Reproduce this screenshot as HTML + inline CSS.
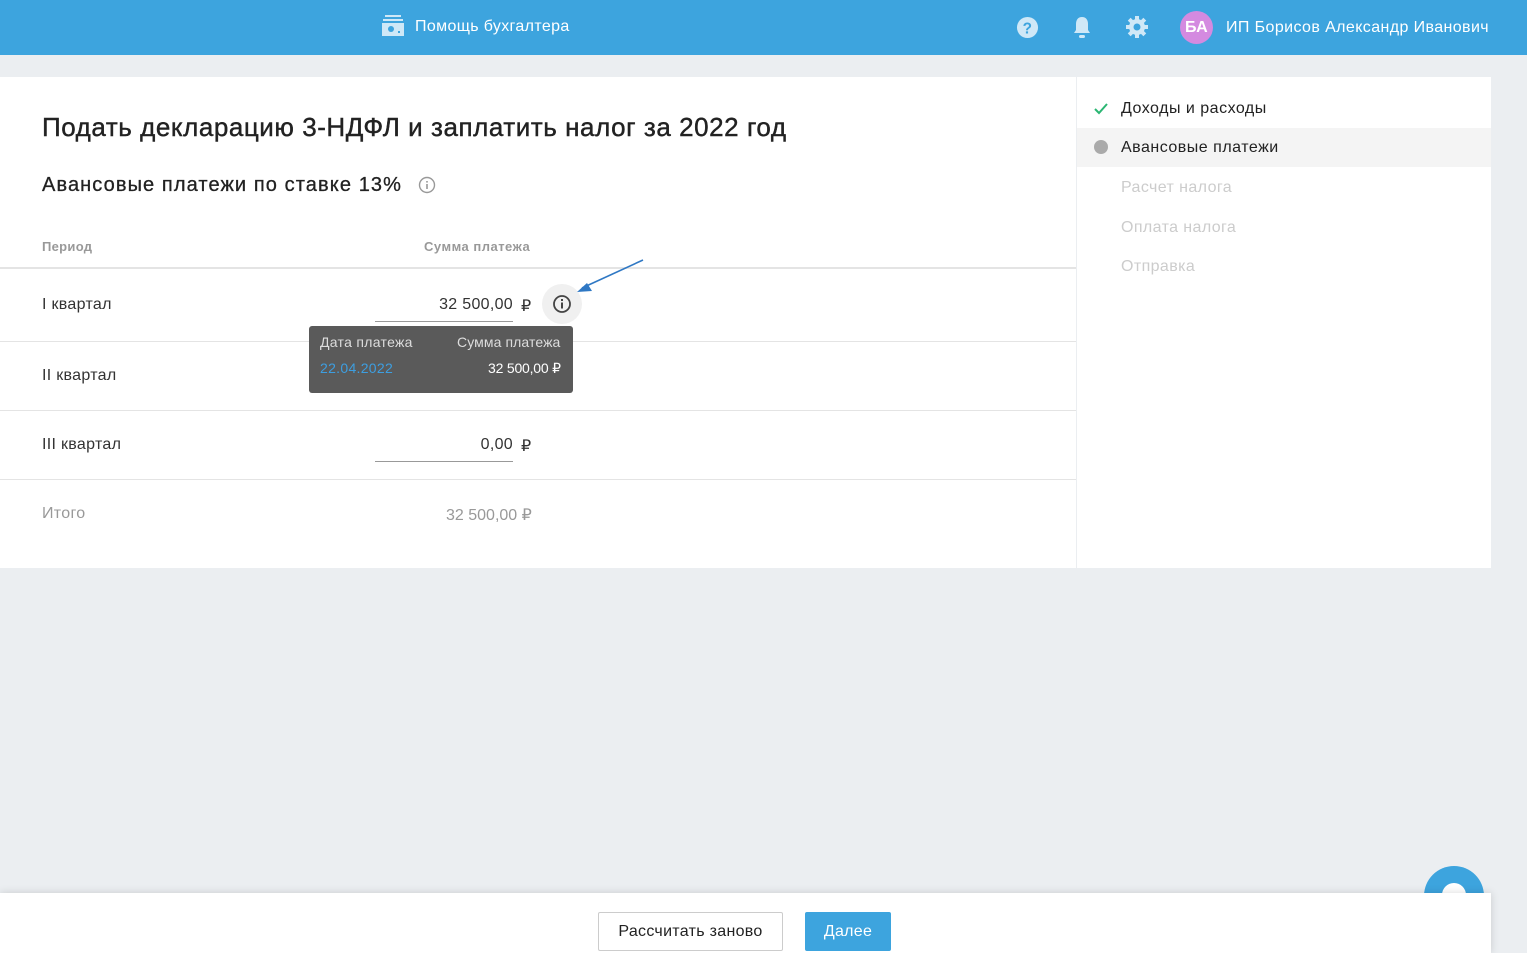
<!DOCTYPE html>
<html><head><meta charset="utf-8"><style>
*{box-sizing:border-box;margin:0;padding:0}
body{width:1527px;height:953px;overflow:hidden;background:#ebeef1;font-family:"Liberation Sans",sans-serif;color:#333;position:relative;letter-spacing:0.3px}
.hdr{position:absolute;left:0;top:0;width:1527px;height:55px;background:#3da4de;color:#fff}
.abs{position:absolute}
.card{position:absolute;left:0;top:77px;width:1076px;height:491px;background:#fff}
.side{position:absolute;left:1077px;top:77px;width:414px;height:491px;background:#fff}
.line{position:absolute;left:0;width:1076px;height:1px;background:#e4e4e4}
.t{position:absolute;white-space:nowrap}
.foot{position:absolute;left:0;top:893px;width:1491px;height:60px;background:#fff;box-shadow:0 0 8px rgba(0,0,0,.15)}
</style></head><body>
<div class="hdr">
 <svg class="abs" style="left:382px;top:14px" width="22" height="22" viewBox="0 0 22 22"><rect x="3" y="1" width="16" height="2" fill="#cfe8f7"/><rect x="1" y="5" width="20" height="2" fill="#cfe8f7"/><rect x="0" y="9" width="22" height="13" fill="#cfe8f7"/><circle cx="9" cy="15" r="3" fill="#3da4de"/><rect x="16" y="17" width="2" height="2" fill="#3da4de"/></svg>
 <div class="t" style="left:415px;top:18px;font-size:16px;letter-spacing:0.35px">Помощь бухгалтера</div>
 <svg class="abs" style="left:1016px;top:16px" width="23" height="23" viewBox="0 0 24 24"><circle cx="12" cy="12" r="11" fill="#cfe8f7"/><text x="12" y="18" font-size="16" font-weight="bold" text-anchor="middle" fill="#3da4de" font-family="Liberation Sans">?</text></svg>
 <svg class="abs" style="left:1072px;top:16px" width="20" height="23" viewBox="0 0 20 23"><path d="M10 1c-4 0-6 3-6 7v6l-2 3h16l-2-3V8c0-4-2-7-6-7z" fill="#cfe8f7"/><rect x="7" y="19" width="6" height="3" rx="1.5" fill="#cfe8f7"/></svg>
 <svg class="abs" style="left:1125px;top:15px" width="24" height="24" viewBox="0 0 24 24"><g fill="#cfe8f7"><circle cx="12" cy="12" r="8"/><g stroke="#cfe8f7" stroke-width="4"><path d="M12 1v22M1 12h22M4.2 4.2l15.6 15.6M19.8 4.2L4.2 19.8"/></g></g><circle cx="12" cy="12" r="3.5" fill="#3da4de"/></svg>
 <div class="abs" style="left:1180px;top:11px;width:33px;height:33px;border-radius:50%;background:#d48ae0;color:#fff;font-weight:bold;font-size:16px;text-align:center;line-height:33px">БА</div>
 <div class="t" style="left:1226px;top:19px;font-size:16px;letter-spacing:0.4px">ИП Борисов Александр Иванович</div>
</div>
<div class="card">
 <div class="t" style="left:42px;top:35px;font-size:26px;letter-spacing:0.55px;color:#222;-webkit-text-stroke:0.4px #222">Подать декларацию 3-НДФЛ и заплатить налог за 2022 год</div>
 <div class="t" style="left:42px;top:97px;font-size:20px;letter-spacing:1.1px;color:#222;-webkit-text-stroke:0.3px #222">Авансовые платежи по ставке 13%</div>
 <svg class="abs" style="left:418px;top:99px" width="18" height="18" viewBox="0 0 18 18"><circle cx="9" cy="9" r="7.5" fill="none" stroke="#999" stroke-width="1.4"/><rect x="8.2" y="8" width="1.6" height="5" fill="#999"/><rect x="8.2" y="5" width="1.6" height="1.6" fill="#999"/></svg>
 <div class="t" style="left:42px;top:162px;font-size:13px;font-weight:bold;color:#999">Период</div>
 <div class="t" style="left:424px;top:162px;font-size:13px;font-weight:bold;color:#999;letter-spacing:0.5px">Сумма платежа</div>
 <div class="line" style="top:190px;height:2px"></div>
 <div class="t" style="left:42px;top:219px;font-size:16px">I квартал</div>
 <div class="t" style="left:375px;width:138px;text-align:right;top:219px;font-size:16px">32 500,00</div>
 <div class="t" style="left:521px;top:219px;font-size:16px">₽</div>
 <div class="abs" style="left:375px;top:244px;width:138px;height:1px;background:#999"></div>
 <div class="abs" style="left:542px;top:207px;width:40px;height:40px;border-radius:50%;background:#f0f0f0"></div>
 <svg class="abs" style="left:552px;top:217px" width="20" height="20" viewBox="0 0 20 20"><circle cx="10" cy="10" r="8" fill="none" stroke="#444" stroke-width="1.8"/><rect x="9" y="8.5" width="2" height="6" fill="#444"/><rect x="9" y="5" width="2" height="2" fill="#444"/></svg>
 <div class="line" style="top:264px"></div>
 <div class="t" style="left:42px;top:290px;font-size:16px">II квартал</div>
 <div class="line" style="top:333px"></div>
 <div class="t" style="left:42px;top:359px;font-size:16px">III квартал</div>
 <div class="t" style="left:375px;width:138px;text-align:right;top:359px;font-size:16px">0,00</div>
 <div class="t" style="left:521px;top:359px;font-size:16px">₽</div>
 <div class="abs" style="left:375px;top:384px;width:138px;height:1px;background:#999"></div>
 <div class="line" style="top:402px"></div>
 <div class="t" style="left:42px;top:428px;font-size:16px;color:#999">Итого</div>
 <div class="t" style="left:446px;top:428px;font-size:16px;color:#999;letter-spacing:0">32 500,00 ₽</div>
 <div class="abs" style="left:309px;top:249px;width:264px;height:67px;background:#5a5a5a;border-radius:3px"></div>
 <div class="t" style="left:320px;top:257px;font-size:14px;color:#ddd">Дата платежа</div>
 <div class="t" style="left:457px;top:257px;font-size:14px;color:#ddd;letter-spacing:0.1px">Сумма платежа</div>
 <div class="t" style="left:488px;top:283px;font-size:14px;color:#fff;letter-spacing:-0.2px">32 500,00 ₽</div>
 <div class="t" style="left:320px;top:283px;font-size:14px;color:#3d9ee0">22.04.2022</div>
 <svg class="abs" style="left:570px;top:180px" width="80" height="40" viewBox="0 0 80 40"><path d="M73 3L12 31" stroke="#2f78c4" stroke-width="1.6" fill="none"/><path d="M7 35l15-1-5-8z" fill="#2f78c4"/></svg>
</div>
<div class="side">
 <svg class="abs" style="left:17px;top:26px" width="14" height="12" viewBox="0 0 14 12"><path d="M1 6l4 4 8-9" stroke="#2bb673" stroke-width="2" fill="none"/></svg>
 <div class="t" style="left:44px;top:23px;font-size:16px;color:#222;letter-spacing:0.5px">Доходы и расходы</div>
 <div class="abs" style="left:0;top:51px;width:414px;height:39px;background:#f4f4f4"></div>
 <div class="abs" style="left:17px;top:63px;width:14px;height:14px;border-radius:50%;background:#aaa"></div>
 <div class="t" style="left:44px;top:62px;font-size:16px;color:#222;letter-spacing:0.5px">Авансовые платежи</div>
 <div class="t" style="left:44px;top:102px;font-size:16px;color:#ccc;letter-spacing:0.4px">Расчет налога</div>
 <div class="t" style="left:44px;top:142px;font-size:16px;color:#ccc;letter-spacing:0.4px">Оплата налога</div>
 <div class="t" style="left:44px;top:181px;font-size:16px;color:#ccc;letter-spacing:0.4px">Отправка</div>
</div>
<div class="abs" style="left:1424px;top:866px;width:60px;height:60px;border-radius:50%;background:#3da4de"></div>
<div class="abs" style="left:1442px;top:883px;width:24px;height:24px;border-radius:50%;background:#fff"></div>
<div class="foot">
 <div class="abs" style="left:598px;top:19px;width:185px;height:39px;border:1px solid #ccc;border-radius:2px;background:#fff;text-align:center;line-height:37px;font-size:16px;color:#222">Рассчитать заново</div>
 <div class="abs" style="left:805px;top:19px;width:86px;height:39px;border-radius:2px;background:#3da4de;text-align:center;line-height:39px;font-size:16px;color:#fff">Далее</div>
</div>
</body></html>
